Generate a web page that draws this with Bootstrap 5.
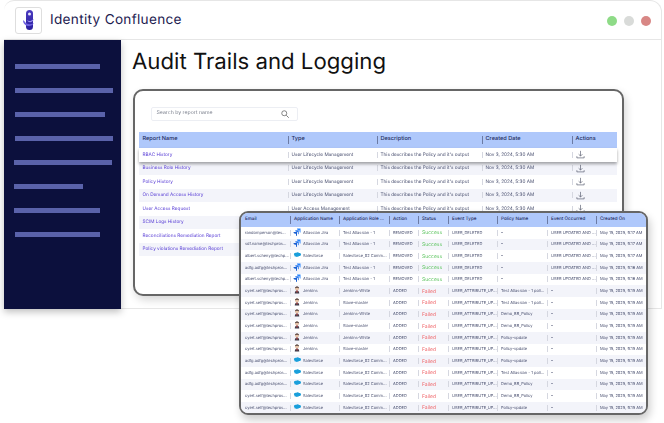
<!doctype html>
<html lang="en"><head><meta charset="utf-8"><title>Identity Confluence</title>
<link href="https://cdn.jsdelivr.net/npm/bootstrap@5.3.0/dist/css/bootstrap.min.css" rel="stylesheet">
<style>
html,body{height:100%;background:#fff;overflow:hidden}
body{font-family:Inter,"Liberation Sans",sans-serif;width:664px;height:423px;text-rendering:geometricPrecision}
.appframe{position:relative;margin-left:4px;width:658px;height:309px;border:1px solid #e6e6e6;border-left-width:0;border-top-left-radius:10px;border-top-right-radius:12px;background:#fff}
.apphead{height:39px;border-bottom:1px solid #e6e6e6;padding-left:11px;padding-right:11px}
.logobox{width:27px;height:27px;border:1px solid #dedede;border-radius:3px}
.brandname{font-size:13.6px;letter-spacing:.31px;color:#1c2050;margin-left:8px}
.dot1{width:10px;height:10px;border-radius:50%;background:#8edb87}
.dot2{width:10px;height:10px;border-radius:50%;background:#d9dbd9}
.dot3{width:10px;height:10px;border-radius:50%;background:#d88785}
.dotgap{gap:7px;margin-right:-1px;margin-top:2px}
.navdark{width:117px;height:269px;background:#0c103d;box-shadow:0 3px 7px rgba(0,0,0,.25);padding-top:24px;flex:none;gap:19px}
.navbar-line{height:5px;background:#5a62aa;margin-left:11px}
.w85{width:85px}.w98{width:98px}.w90{width:90px}.w69{width:69px}.w86{width:86px}
.nudge{margin-left:10px}
.pagetitle{font-size:22.2px;font-weight:400;color:#111;line-height:1;margin:11px 0 0 11px}
.panelone{width:491px;height:207px;margin:16px 0 0 11.5px;border:2px solid #666;border-radius:10px;background:#fff;box-shadow:2px 4px 9px rgba(0,0,0,.16);padding:16px 4px 0}
.searchbox{width:147px;height:14px;border:1px solid #eceef3;border-radius:2px;margin-left:12px;margin-bottom:11px;padding:0 8px 0 5px;font-size:5.2px;color:#7a7f8c}
.panelone .auditgrid{width:478px}
.panelone .auditgrid th:nth-child(1){width:149px}.panelone .auditgrid th:nth-child(2){width:89px}.panelone .auditgrid th:nth-child(3){width:105px}.panelone .auditgrid th:nth-child(4){width:90px}.panelone .auditgrid th:nth-child(5){width:45px}
.auditgrid{table-layout:fixed;margin:0;--bs-table-bg:#fff;border-collapse:separate;border-spacing:0}
.auditgrid thead{--bs-table-bg:#afc8fb}
.auditgrid tbody tr:nth-child(even){--bs-table-bg:#f3f4fa}
.table.auditgrid>:not(caption)>*>*{padding:0 0 0 4px;border:0;box-shadow:none;vertical-align:middle;line-height:1;white-space:nowrap;overflow:hidden;background-repeat:no-repeat;background-position:0 50%;color:#4a5070}
.table.auditgrid>thead>tr>*{color:#1e2c5e;font-weight:500;background-image:linear-gradient(#6c7ba4,#6c7ba4);background-size:1px 8px}
.table.auditgrid>tbody>tr>*{background-image:linear-gradient(#d5d7e0,#d5d7e0);background-size:1px 6px}
.table.auditgrid>*>tr>*:first-child{background-image:none}
.panelone .auditgrid{font-size:4.7px}
.panelone thead tr{height:16px}.panelone tbody tr{height:13.5px}
.panelone thead th{font-size:5.6px}
.table.auditgrid>tbody>tr>.reportlink{color:#5a3fd6}
.liftrow{position:relative;box-shadow:0 2px 3px rgba(0,0,0,.35)}
.paneltwo{position:absolute;left:235px;top:210px;width:409px;height:204px;border:2px solid #666;border-radius:9px;background:#fff;box-shadow:2px 5px 8px rgba(0,0,0,.2);overflow:hidden}
.paneltwo .auditgrid{width:405px;font-size:4px}
.paneltwo th:nth-child(1){width:49px}.paneltwo th:nth-child(2){width:49px}.paneltwo th:nth-child(3){width:50px}.paneltwo th:nth-child(4){width:29px}.paneltwo th:nth-child(5){width:30px}.paneltwo th:nth-child(6){width:49px}.paneltwo th:nth-child(7){width:50px}.paneltwo th:nth-child(8){width:49px}.paneltwo th:nth-child(9){width:50px}
.paneltwo thead tr{height:14px}.paneltwo tbody tr{height:11.67px}
.table.auditgrid.tighthead>thead>tr>*{font-size:4.6px}
.table.auditgrid.tighthead>tbody>tr>.okstate{color:#5cc45f;font-size:5px;padding-top:2px}
.table.auditgrid.tighthead>tbody>tr>.badstate{color:#f0686c;font-size:5px;padding-top:2px}
.table.auditgrid.tighthead>tbody>tr>td:nth-child(2){padding-bottom:2px}
.appmark{width:8px;height:8px;vertical-align:-2.500px;margin-left:-1px;margin-right:2px}
.dlmark{width:9px;height:9px;display:block}
.softtext{filter:blur(.3px)}
</style></head><body>
<svg width="0" height="0" class="position-absolute">
<symbol id="ic-jira" viewBox="0 0 16 16"><path d="M15 1H8c0 2 1.500 3.500 3.500 3.500H13V6c0 2 1 3 2 3z" fill="#2684ff"/><path d="M11.500 4.500h-7c0 2 1.500 3.500 3.500 3.500h1.500v1.500c0 2 1 3 2 3z" fill="#2a79ee"/><path d="M8 8H1c0 2 1.500 3.500 3.500 3.500H6V13c0 2 1 3 2 3z" fill="#1a5fd0"/></symbol>
<symbol id="ic-sf" viewBox="0 0 16 16"><path d="M6.500 3.500c.7-.8 1.700-1.200 2.700-1.200 1.300 0 2.400.7 3 1.800 2-.7 3.800.8 3.800 2.900s-1.900 3.700-3.900 2.900c-.5.9-1.700 1.400-2.800 1-.5 1.300-2.600 1.600-3.500.2C3.800 11.500 2.400 10 2.900 8.400 1 7.200 1.800 4.300 4 4.200c.7-.5 1.700-.8 2.500-.7z" fill="#1a9fdb"/></symbol>
<symbol id="ic-jk" viewBox="0 0 16 16"><circle cx="8" cy="5" r="4" fill="#e8c4a8"/><path d="M4 5c0-3 2-4 4-4s4 1 4 4c-1-2-7-2-8 0z" fill="#4a3a38"/><path d="M3.500 15c0-4 2-6 4.500-6s4.500 2 4.500 6z" fill="#3f3c4c"/><path d="M7 9h2l.3 3L8 13.500 6.700 12z" fill="#c94c44"/></symbol>
<symbol id="ic-dl" viewBox="0 0 16 16"><path d="M8 1.500v9M4.700 7.500 8 10.800l3.300-3.300M1.500 11v3h13v-3" fill="none" stroke="#4a4f63" stroke-width="1.100"/></symbol>
</svg>
<div class="appframe">
  <header class="apphead d-flex align-items-center">
    <div class="logobox d-flex align-items-center justify-content-center">
      <svg width="16" height="22" viewBox="0 0 16 22"><defs><linearGradient id="lg" x1="0" y1="0" x2="0" y2="1"><stop offset="0" stop-color="#4a3ac0"/><stop offset="1" stop-color="#2a1f9e"/></linearGradient></defs><rect x="5" y="1" width="7" height="20" rx="3.500" fill="url(#lg)"/><circle cx="8.500" cy="5" r="1.500" fill="#e7e6fb"/><path d="M2 11c0 4 3 6 6 6 2 0 4-1 5-3-2 1.500-7 2-9-1-.7-1-1.500-1.500-2-2z" fill="#6f62e0"/><path d="M6 11c2 2 4 1 7-1-1 3-5 5-7 1z" fill="#9c92f0"/></svg>
    </div>
    <div class="brandname">Identity Confluence</div>
    <div class="ms-auto d-flex dotgap"><span class="dot1"></span><span class="dot2"></span><span class="dot3"></span></div>
  </header>
  <div class="d-flex">
    <nav class="navdark d-flex flex-column">
      <div class="navbar-line w85"></div><div class="navbar-line w98"></div><div class="navbar-line w90"></div><div class="navbar-line w98"></div>
      <div class="navbar-line w98 nudge"></div><div class="navbar-line w69 nudge"></div><div class="navbar-line w86 nudge"></div><div class="navbar-line w85"></div>
    </nav>
    <main class="flex-grow-1">
      <h1 class="pagetitle">Audit Trails and Logging</h1>
      <section class="panelone">
        <div class="searchbox d-flex align-items-center justify-content-between softtext"><span>Search by report name</span>
          <svg width="8" height="8" viewBox="0 0 16 16"><circle cx="6.500" cy="6.500" r="5" fill="none" stroke="#555" stroke-width="1.400"/><path d="m10.500 10.500 5 5" stroke="#555" stroke-width="1.500"/></svg></div>
        <table class="table auditgrid softtext">
          <thead><tr><th>Report Name</th><th>Type</th><th>Description</th><th>Created Date</th><th>Actions</th></tr></thead>
          <tbody>
            <tr class="liftrow"><td class="reportlink">RBAC History</td><td>User Lifecycle Management</td><td>This describes the Policy and it's output</td><td>Nov 3, 2024, 5:30 AM</td><td><svg class="dlmark"><use href="#ic-dl"/></svg></td></tr>
            <tr><td class="reportlink">Business Role History</td><td>User Lifecycle Management</td><td>This describes the Policy and it's output</td><td>Nov 3, 2024, 5:30 AM</td><td><svg class="dlmark"><use href="#ic-dl"/></svg></td></tr>
            <tr><td class="reportlink">Policy History</td><td>User Lifecycle Management</td><td>This describes the Policy and it's output</td><td>Nov 3, 2024, 5:30 AM</td><td><svg class="dlmark"><use href="#ic-dl"/></svg></td></tr>
            <tr><td class="reportlink">On Demand Access History</td><td>User Lifecycle Management</td><td>This describes the Policy and it's output</td><td>Nov 3, 2024, 5:30 AM</td><td><svg class="dlmark"><use href="#ic-dl"/></svg></td></tr>
            <tr><td class="reportlink">User Access Request</td><td>User Access Management</td><td>This describes the Policy and it's output</td><td>Nov 3, 2024, 5:30 AM</td><td><svg class="dlmark"><use href="#ic-dl"/></svg></td></tr>
            <tr><td class="reportlink">SCIM Logs History</td><td>User Access Management</td><td>This describes the Policy and it's output</td><td>Nov 3, 2024, 5:30 AM</td><td><svg class="dlmark"><use href="#ic-dl"/></svg></td></tr>
            <tr><td class="reportlink">Reconciliations Remediation Report</td><td>User Access Management</td><td>This describes the Policy and it's output</td><td>Nov 3, 2024, 5:30 AM</td><td><svg class="dlmark"><use href="#ic-dl"/></svg></td></tr>
            <tr><td class="reportlink">Policy violations Remediation Report</td><td>User Access Management</td><td>This describes the Policy and it's output</td><td>Nov 3, 2024, 5:30 AM</td><td><svg class="dlmark"><use href="#ic-dl"/></svg></td></tr>
          </tbody>
        </table>
      </section>
    </main>
  </div>
  <section class="paneltwo">
    <table class="table auditgrid tighthead softtext">
      <thead><tr><th>Email</th><th>Application Name</th><th>Application Role ...</th><th>Action</th><th>Status</th><th>Event Type</th><th>Policy Name</th><th>Event Occurred</th><th>Created On</th></tr></thead>
      <tbody>
        <tr><td>randomperson@tes...</td><td><svg class="appmark"><use href="#ic-jira"/></svg>Atlassian Jira</td><td>Test Atlassian - 1</td><td>REMOVED</td><td class="okstate">Success</td><td>USER_DELETED</td><td>–</td><td>USER UPDATED AND ...</td><td>May 15, 2025, 9:17 AM</td></tr>
        <tr><td>sdf.name@techpros...</td><td><svg class="appmark"><use href="#ic-jira"/></svg>Atlassian Jira</td><td>Test Atlassian - 1</td><td>REMOVED</td><td class="okstate">Success</td><td>USER_DELETED</td><td>–</td><td>USER UPDATED AND ...</td><td>May 15, 2025, 9:17 AM</td></tr>
        <tr><td>albert.scheny@techp...</td><td><svg class="appmark"><use href="#ic-sf"/></svg>Salesforce</td><td>Salesforce_02 Comm...</td><td>REMOVED</td><td class="okstate">Success</td><td>USER_DELETED</td><td>–</td><td>USER UPDATED AND ...</td><td>May 15, 2025, 9:17 AM</td></tr>
        <tr><td>adfg.adfg@techpros...</td><td><svg class="appmark"><use href="#ic-jira"/></svg>Atlassian Jira</td><td>Test Atlassian - 1</td><td>REMOVED</td><td class="okstate">Success</td><td>USER_DELETED</td><td>–</td><td>USER UPDATED AND ...</td><td>May 15, 2025, 9:16 AM</td></tr>
        <tr><td>albert.scheny@techp...</td><td><svg class="appmark"><use href="#ic-jira"/></svg>Atlassian Jira</td><td>Test Atlassian - 1</td><td>REMOVED</td><td class="okstate">Success</td><td>USER_DELETED</td><td>–</td><td>USER UPDATED AND ...</td><td>May 15, 2025, 9:16 AM</td></tr>
        <tr><td>cyert.self@techpros...</td><td><svg class="appmark"><use href="#ic-jk"/></svg>Jenkins</td><td>Jenkins-White</td><td>ADDED</td><td class="badstate">Failed</td><td>USER_ATTRIBUTE_UP...</td><td>Test Atlassian - 1 poli...</td><td>–</td><td>May 15, 2025, 9:15 AM</td></tr>
        <tr><td>cyert.self@techpros...</td><td><svg class="appmark"><use href="#ic-jk"/></svg>Jenkins</td><td>Slave-master</td><td>ADDED</td><td class="badstate">Failed</td><td>USER_ATTRIBUTE_UP...</td><td>Test Atlassian - 1 poli...</td><td>–</td><td>May 15, 2025, 9:15 AM</td></tr>
        <tr><td>cyert.self@techpros...</td><td><svg class="appmark"><use href="#ic-jk"/></svg>Jenkins</td><td>Jenkins-White</td><td>ADDED</td><td class="badstate">Failed</td><td>USER_ATTRIBUTE_UP...</td><td>Demo_BR_Policy</td><td>–</td><td>May 15, 2025, 9:15 AM</td></tr>
        <tr><td>cyert.self@techpros...</td><td><svg class="appmark"><use href="#ic-jk"/></svg>Jenkins</td><td>Slave-master</td><td>ADDED</td><td class="badstate">Failed</td><td>USER_ATTRIBUTE_UP...</td><td>Demo_BR_Policy</td><td>–</td><td>May 15, 2025, 9:15 AM</td></tr>
        <tr><td>cyert.self@techpros...</td><td><svg class="appmark"><use href="#ic-jk"/></svg>Jenkins</td><td>Jenkins-White</td><td>ADDED</td><td class="badstate">Failed</td><td>USER_ATTRIBUTE_UP...</td><td>Policy-update</td><td>–</td><td>May 15, 2025, 9:15 AM</td></tr>
        <tr><td>cyert.self@techpros...</td><td><svg class="appmark"><use href="#ic-jk"/></svg>Jenkins</td><td>Slave-master</td><td>ADDED</td><td class="badstate">Failed</td><td>USER_ATTRIBUTE_UP...</td><td>Policy-update</td><td>–</td><td>May 15, 2025, 9:15 AM</td></tr>
        <tr><td>adfg.adfg@techpros...</td><td><svg class="appmark"><use href="#ic-sf"/></svg>Salesforce</td><td>Salesforce_02 Comm...</td><td>ADDED</td><td class="badstate">Failed</td><td>USER_ATTRIBUTE_UP...</td><td>Policy-update</td><td>–</td><td>May 15, 2025, 9:15 AM</td></tr>
        <tr><td>adfg.adfg@techpros...</td><td><svg class="appmark"><use href="#ic-sf"/></svg>Salesforce</td><td>Salesforce_02 Comm...</td><td>ADDED</td><td class="badstate">Failed</td><td>USER_ATTRIBUTE_UP...</td><td>Test Atlassian - 1 poli...</td><td>–</td><td>May 15, 2025, 9:15 AM</td></tr>
        <tr><td>adfg.adfg@techpros...</td><td><svg class="appmark"><use href="#ic-sf"/></svg>Salesforce</td><td>Salesforce_02 Comm...</td><td>ADDED</td><td class="badstate">Failed</td><td>USER_ATTRIBUTE_UP...</td><td>Demo_BR_Policy</td><td>–</td><td>May 15, 2025, 9:15 AM</td></tr>
        <tr><td>cyert.self@techpros...</td><td><svg class="appmark"><use href="#ic-sf"/></svg>Salesforce</td><td>Salesforce_02 Comm...</td><td>ADDED</td><td class="badstate">Failed</td><td>USER_ATTRIBUTE_UP...</td><td>Demo_BR_Policy</td><td>–</td><td>May 15, 2025, 9:15 AM</td></tr>
        <tr><td>cyert.self@techpros...</td><td><svg class="appmark"><use href="#ic-sf"/></svg>Salesforce</td><td>Salesforce_02 Comm...</td><td>ADDED</td><td class="badstate">Failed</td><td>USER_ATTRIBUTE_UP...</td><td>Policy-update</td><td>–</td><td>May 15, 2025, 9:15 AM</td></tr>
      </tbody>
    </table>
  </section>
</div>
</body></html>
